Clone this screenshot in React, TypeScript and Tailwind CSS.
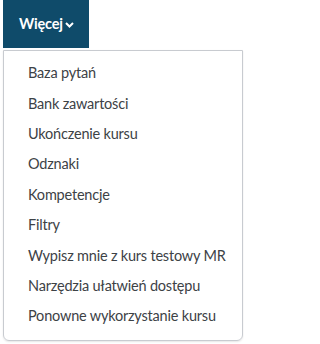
import React from "react";

const items = [
  "Baza pytań",
  "Bank zawartości",
  "Ukończenie kursu",
  "Odznaki",
  "Kompetencje",
  "Filtry",
  "Wypisz mnie z kurs testowy MR",
  "Narzędzia ułatwień dostępu",
  "Ponowne wykorzystanie kursu",
];

export default function App() {
  return (
    <div className="w-[244px] h-[344px] bg-white pl-[3px] pr-px font-['Lato','Open_Sans',sans-serif] text-[14.5px] tracking-[-0.2px] overflow-hidden">
      <button className="flex items-center gap-[2px] h-[48px] w-[86px] pl-4 bg-[#0f4b6a] text-white font-bold">
        Więcej
        <svg width="9" height="6" viewBox="0 0 9 6" className="mt-[2px]">
          <path d="M1 1l3.5 3.5L8 1" fill="none" stroke="white" strokeWidth="2" />
        </svg>
      </button>
      <div className="mt-[2px] border border-[#c8cbd0] rounded-b-[6px] pt-[7px] pb-2 shadow-[0_1px_2px_rgba(0,0,0,0.1)]">
        {items.map((item) => (
          <div key={item} className="px-6 h-[30.4px] flex items-center text-[#3d4246] whitespace-nowrap">
            {item}
          </div>
        ))}
      </div>
    </div>
  );
}
